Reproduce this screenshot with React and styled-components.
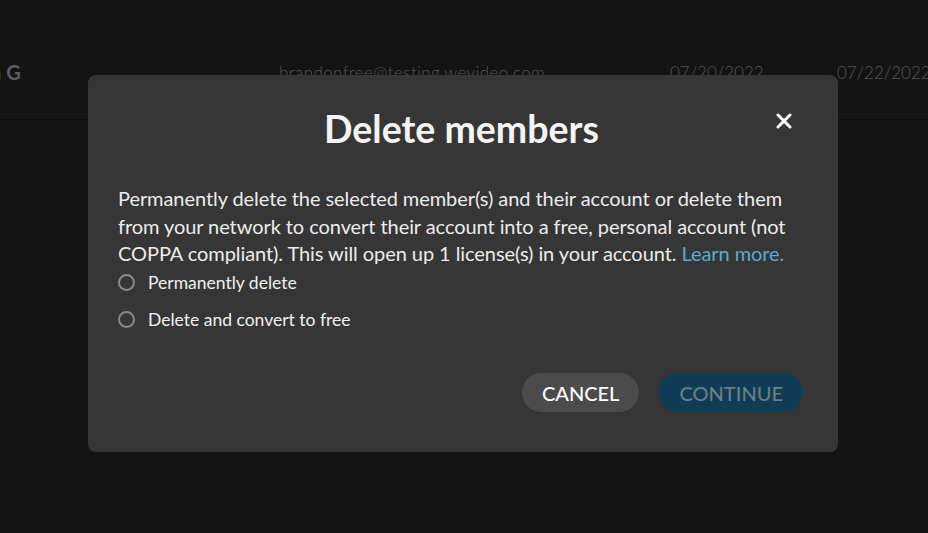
import React from "react";
import styled, { createGlobalStyle } from "styled-components";

const Global = createGlobalStyle`
  html, body { margin: 0; padding: 0; background: #141414; }
  body { font-family: Lato, "Open Sans", sans-serif; }
  * { box-sizing: border-box; }
`;

const Page = styled.div`
  width: 928px;
  height: 533px;
  background: #141414;
  overflow: hidden;
`;

const TableRow = styled.div`
  height: 115px;
  border-bottom: 1px solid #1f1f1f;
  display: grid;
  grid-template-columns: 279px 391px 167px 1fr;
  align-items: center;
  padding-top: 60px;
  align-content: start;
  color: #4f4f4f;
`;

const NameCell = styled.div`
  font-size: 20px;
  font-weight: 700;
  color: #5c5c5c;
  margin-left: -10px;
  white-space: nowrap;
`;

const Cell = styled.div`
  font-size: 17px;
  font-family: Lato, sans-serif;
  font-weight: 300;
  color: #555555;
  white-space: nowrap;
  letter-spacing: ${(p) => p.$spacing || 0}px;
`;

const Overlay = styled.div`
  position: fixed;
  inset: 0;
  display: flex;
  align-items: center;
  justify-content: center;
  padding-bottom: 6px;
  padding-right: 2px;
`;

const Modal = styled.div`
  position: relative;
  width: 750px;
  height: 377px;
  background: #363636;
  border-radius: 8px;
  padding: 27px 35px 40px 30px;
  display: flex;
  flex-direction: column;
  color: #ececec;
`;

const Title = styled.h2`
  margin: 0;
  text-align: center;
  font-size: 37.5px;
  font-weight: 700;
  line-height: 54px;
  color: #f4f4f4;
  padding-left: 2px;
`;

const Close = styled.button`
  position: absolute;
  top: 36px;
  right: 44px;
  width: 20px;
  height: 20px;
  padding: 0;
  border: 0;
  background: none;
  color: #fff;
  cursor: pointer;
  display: flex;
  align-items: center;
  justify-content: center;
`;

const Body = styled.p`
  margin: 29px 0 0;
  font-size: 20px;
  line-height: 27.5px;
  color: #ececec;
  letter-spacing: -0.07px;
`;

const Link = styled.a`
  color: #5aaad3;
  text-decoration: none;
`;

const Options = styled.div`
  display: flex;
  flex-direction: column;
  gap: 14px;
  margin-top: 3px;
`;

const Option = styled.label`
  display: flex;
  align-items: center;
  gap: 13px;
  font-size: 17.5px;
  line-height: 23px;
  color: #f0f0f0;
  cursor: pointer;
`;

const Radio = styled.span`
  width: 17px;
  height: 17px;
  border-radius: 50%;
  border: 2px solid #8a8a8a;
  flex: none;
`;

const Actions = styled.div`
  margin-top: auto;
  display: flex;
  justify-content: flex-end;
  gap: 20px;
`;

const Button = styled.button`
  height: 39px;
  padding: 0 20px;
  border: 0;
  border-radius: 20px;
  font-family: Lato, sans-serif;
  font-size: 20px;
  font-weight: 500;
  background: ${(p) => (p.$primary ? "#0e3d55" : "#4b4b4b")};
  color: ${(p) => (p.$primary ? "#6b7d86" : "#ffffff")};
  cursor: pointer;
`;

export default function App() {
  return (
    <Page>
      <Global />
      <TableRow>
        <NameCell>n G</NameCell>
        <Cell $spacing={0.4}>brandonfree@testing.wevideo.com</Cell>
        <Cell>07/20/2022</Cell>
        <Cell>07/22/2022</Cell>
      </TableRow>
      <Overlay>
        <Modal>
          <Title>Delete members</Title>
          <Close aria-label="Close">
            <svg width="16" height="16" viewBox="0 0 16 16">
              <path d="M2 2 L14 14 M14 2 L2 14" stroke="#fff" strokeWidth="3" strokeLinecap="round" />
            </svg>
          </Close>
          <Body>
            Permanently delete the selected member(s) and their account or delete them from your network to convert their account into a free, personal account (not COPPA compliant). This will open up 1 license(s) in your account.{" "}
            <Link href="#">Learn more.</Link>
          </Body>
          <Options>
            <Option>
              <Radio />
              Permanently delete
            </Option>
            <Option>
              <Radio />
              Delete and convert to free
            </Option>
          </Options>
          <Actions>
            <Button>CANCEL</Button>
            <Button $primary>CONTINUE</Button>
          </Actions>
        </Modal>
      </Overlay>
    </Page>
  );
}
